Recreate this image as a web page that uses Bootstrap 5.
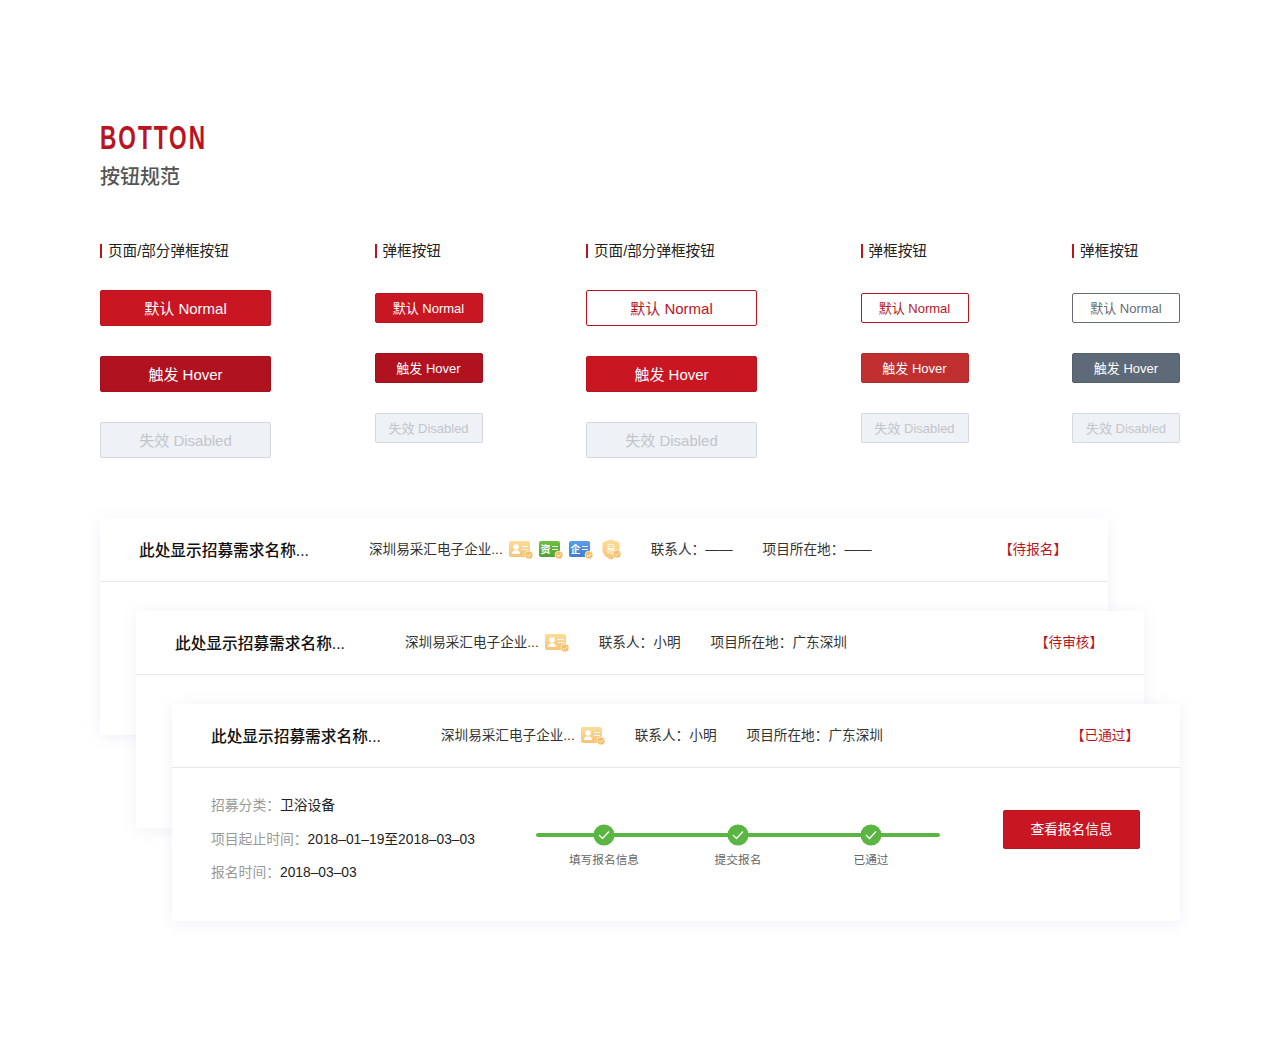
<!DOCTYPE html>
<html lang="zh-CN">
<head>
<meta charset="utf-8">
<title>Botton</title>
<link href="https://cdn.jsdelivr.net/npm/bootstrap@5.3.0/dist/css/bootstrap.min.css" rel="stylesheet">
<style>
body{background:#fff;font-family:"Liberation Sans","Noto Sans CJK SC",sans-serif;color:#222;}
.sheet{width:1280px;height:1040px;padding:120px 100px 0;overflow:hidden;}
.ttl{font-family:"Liberation Sans",sans-serif;font-weight:700;font-size:34px;line-height:36px;letter-spacing:3px;color:#b9141f;margin:-1px 0 0;height:36px;transform:scaleX(.665);transform-origin:left center;}
.subttl{font-size:20px;line-height:28px;color:#555;margin:8px 0 0;font-weight:500;}
.specs{width:1080px;margin-top:53px;}
.lab{border-left:2px solid #b9141f;padding-left:6px;font-size:14.6px;line-height:14px;height:14px;color:#222;margin-bottom:32px;white-space:nowrap;}
.colbig{width:171px;}
.colsm{width:108px;}
.colsm .lab{margin-bottom:35px;}
.b{display:block;border-radius:2px;border:1px solid;text-align:center;white-space:nowrap;}
.colbig .b{height:36px;line-height:36px;font-size:15px;margin-bottom:30px;}
.colsm .b{height:30px;line-height:30px;font-size:13px;margin-bottom:30px;}
.b-red{background:#c81623;border-color:#b9141f;color:#fff;}
.b-dark{background:#b11220;border-color:#a5101c;color:#fff;}
.b-off{background:#eef1f5;border-color:#d5d9df;color:#c2c6cc;}
.b-line{background:#fff;border-color:#b9141f;color:#b9141f;}
.b-soft{background:#c03030;border-color:#b52a2a;color:#fff;}
.b-grayline{background:#fff;border-color:#666c75;color:#666c75;}
.b-slate{background:#5f6a78;border-color:#565f6c;color:#fff;}
.stack{margin-top:30px;}
.tile{width:1008px;height:217px;background:#fff;box-shadow:0 2px 14px rgba(120,130,170,.11);}
.tile:nth-child(2){margin-top:-124px;margin-left:36px;}
.tile:nth-child(3){margin-top:-124px;margin-left:72px;}
.tile-head{height:64px;border-bottom:1px solid #e6e8f0;padding:2px 41px 0 39px;font-size:13.6px;color:#333;white-space:nowrap;}
.nm{width:230px;font-size:15.7px;font-weight:500;color:#111;}
.co{margin-right:6px;}
.ico{display:block;flex:none;margin-top:-2px;}
.ico+.ico{margin-left:6px;}
.ico+.shld{margin-left:8px;}
.stat{margin-left:auto;color:#b9141f;}
.gapl{margin-left:30px;font-size:13.65px;}
.tile-body{padding:0 40px 0 39px;height:153px;}
.facts{width:325px;font-size:13.8px;line-height:20px;padding-top:28px;}
.facts div{margin-bottom:13.5px;color:#222;white-space:nowrap;}
.facts span{color:#999;}
.prog{width:404px;margin-top:65px;position:relative;font-size:11.7px;color:#666;height:40px;}
.bar{height:4px;background:#5ab543;border-radius:2px;}
.stepper{position:absolute;top:-9px;width:80px;text-align:center;transform:translateX(-50%);}
.stepper svg{display:block;margin:0 auto 5px;}
.b.go{width:137px;height:39px;line-height:38px;font-size:13.7px;margin-top:42px;margin-left:auto;margin-right:0;}
</style>
</head>
<body>
<svg width="0" height="0" class="position-absolute">
  <defs>
    <linearGradient id="gy" x1="0" y1="0" x2="0" y2="1"><stop offset="0" stop-color="#fbdc9a"/><stop offset="1" stop-color="#f7c478"/></linearGradient>
    <linearGradient id="gg" x1="0" y1="0" x2="0" y2="1"><stop offset="0" stop-color="#6fc044"/><stop offset="1" stop-color="#4fa233"/></linearGradient>
    <linearGradient id="gb" x1="0" y1="0" x2="0" y2="1"><stop offset="0" stop-color="#5c9ce6"/><stop offset="1" stop-color="#3f7dd0"/></linearGradient>
    <g id="tick"><circle cx="20" cy="15" r="4" fill="#f2c06a" stroke="#fff" stroke-width=".6"/><path d="M18 15l1.500 1.500 2.500-2.700" fill="none" stroke="#fff" stroke-width="1"/></g>
    <g id="lines"><path d="M13 6.500h6M13 9.500h6" stroke="#fff" stroke-opacity=".85" stroke-width="1.100"/></g>
    <g id="idc"><rect x="0" y="1" width="21" height="16" rx="2" fill="url(#gy)"/><circle cx="7" cy="7" r="2.800" fill="#fff"/><path d="M3 14c0-2.900 2.200-3.800 4-3.800s4 .9 4 3.800z" fill="#fff"/><use href="#lines"/><use href="#tick"/></g>
    <g id="chk"><circle cx="11" cy="11" r="10.500" fill="#5ab543"/><path d="M6 11l3.500 3.500 6.500-7" fill="none" stroke="#fff" stroke-width="1.300"/></g>
  </defs>
</svg>
<div class="sheet">
  <h1 class="ttl">BOTTON</h1>
  <p class="subttl">按钮规范</p>

  <div class="specs d-flex justify-content-between">
    <div class="colbig">
      <div class="lab">页面/部分弹框按钮</div>
      <span class="b b-red">默认 Normal</span>
      <span class="b b-dark">触发 Hover</span>
      <span class="b b-off">失效 Disabled</span>
    </div>
    <div class="colsm">
      <div class="lab">弹框按钮</div>
      <span class="b b-red">默认 Normal</span>
      <span class="b b-dark">触发 Hover</span>
      <span class="b b-off">失效 Disabled</span>
    </div>
    <div class="colbig">
      <div class="lab">页面/部分弹框按钮</div>
      <span class="b b-line">默认 Normal</span>
      <span class="b b-red">触发 Hover</span>
      <span class="b b-off">失效 Disabled</span>
    </div>
    <div class="colsm">
      <div class="lab">弹框按钮</div>
      <span class="b b-line">默认 Normal</span>
      <span class="b b-soft">触发 Hover</span>
      <span class="b b-off">失效 Disabled</span>
    </div>
    <div class="colsm">
      <div class="lab">弹框按钮</div>
      <span class="b b-grayline">默认 Normal</span>
      <span class="b b-slate">触发 Hover</span>
      <span class="b b-off">失效 Disabled</span>
    </div>
  </div>

  <div class="stack">
    <div class="tile">
      <div class="tile-head d-flex align-items-center">
        <div class="nm">此处显示招募需求名称...</div>
        <div class="co">深圳易采汇电子企业...</div>
        <svg class="ico" width="24" height="20" viewBox="0 0 24 20"><use href="#idc"/></svg>
        <svg class="ico" width="24" height="20" viewBox="0 0 24 20"><rect y="1" width="21" height="16" rx="2" fill="url(#gg)"/><text x="1.500" y="13" font-size="10" font-weight="700" fill="#fff">资</text><use href="#lines"/><use href="#tick"/></svg>
        <svg class="ico" width="24" height="20" viewBox="0 0 24 20"><rect y="1" width="21" height="16" rx="2" fill="url(#gb)"/><text x="1.500" y="13" font-size="10" font-weight="700" fill="#fff">企</text><use href="#lines"/><use href="#tick"/></svg>
        <svg class="ico shld" width="20" height="21" viewBox="4 0 20 21"><path d="M14 .5l8.500 3v7.500c0 4.500-3.500 7.500-8.500 9.500-5-2-8.500-5-8.500-9.500V3.500z" fill="url(#gy)"/><text x="9" y="14" font-size="10" fill="#fff">易</text><use href="#tick"/></svg>
        <div class="gapl">联系人：——</div>
        <div class="gapl">项目所在地：——</div>
        <div class="stat">【待报名】</div>
      </div>
    </div>
    <div class="tile">
      <div class="tile-head d-flex align-items-center">
        <div class="nm">此处显示招募需求名称...</div>
        <div class="co">深圳易采汇电子企业...</div>
        <svg class="ico" width="24" height="20" viewBox="0 0 24 20"><use href="#idc"/></svg>
        <div class="gapl">联系人：小明</div>
        <div class="gapl">项目所在地：广东深圳</div>
        <div class="stat">【待审核】</div>
      </div>
    </div>
    <div class="tile">
      <div class="tile-head d-flex align-items-center">
        <div class="nm">此处显示招募需求名称...</div>
        <div class="co">深圳易采汇电子企业...</div>
        <svg class="ico" width="24" height="20" viewBox="0 0 24 20"><use href="#idc"/></svg>
        <div class="gapl">联系人：小明</div>
        <div class="gapl">项目所在地：广东深圳</div>
        <div class="stat">【已通过】</div>
      </div>
      <div class="tile-body d-flex">
        <div class="facts">
          <div><span>招募分类：</span>卫浴设备</div>
          <div><span>项目起止时间：</span>2018–01–19至2018–03–03</div>
          <div><span>报名时间：</span>2018–03–03</div>
        </div>
        <div class="prog">
          <div class="bar"></div>
          <div class="stepper" style="left:68px"><svg width="22" height="22" viewBox="0 0 22 22"><use href="#chk"/></svg>填写报名信息</div>
          <div class="stepper" style="left:202px"><svg width="22" height="22" viewBox="0 0 22 22"><use href="#chk"/></svg>提交报名</div>
          <div class="stepper" style="left:335px"><svg width="22" height="22" viewBox="0 0 22 22"><use href="#chk"/></svg>已通过</div>
        </div>
        <div class="flex-grow-1"><span class="b b-red go">查看报名信息</span></div>
      </div>
    </div>
  </div>
</div>
<script src="https://cdn.jsdelivr.net/npm/bootstrap@5.3.0/dist/js/bootstrap.bundle.min.js"></script>
</body>
</html>
